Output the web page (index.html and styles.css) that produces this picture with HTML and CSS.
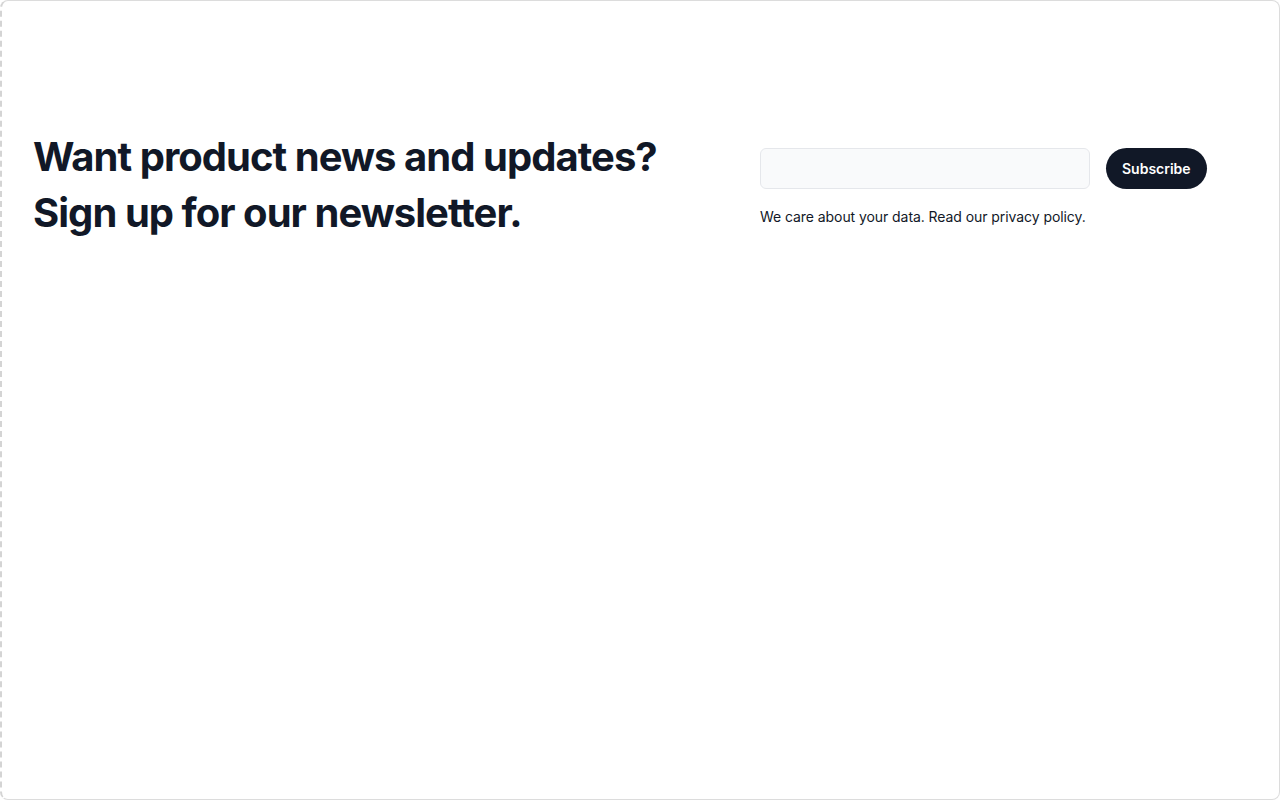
FILE: index.html
```html
<!DOCTYPE html>
<html lang="en">
<head>
<meta charset="utf-8">
<title>Newsletter</title>
<link rel="stylesheet" href="styles.css">
</head>
<body>
<div class="frame">
  <section class="newsletter">
    <h2 class="headline">Want product news and updates?<br>Sign up for our newsletter.</h2>
    <div class="signup">
      <form class="form">
        <input class="email" type="email" aria-label="Email address">
        <button class="btn" type="button">Subscribe</button>
      </form>
      <p class="note">We care about your data. Read our <a href="#">privacy policy</a>.</p>
    </div>
  </section>
</div>
</body>
</html>
```

FILE: styles.css
```css
* { box-sizing: border-box; }
html, body { margin: 0; padding: 0; background: #fff; }
body { font-family: Inter, "Noto Sans", sans-serif; color: #111827; }
.frame {
  width: 1280px;
  height: 800px;
  border: 1px solid #dcdcdc;
  border-left: 2px dashed #d4d4d4;
  border-radius: 8px;
  background: #fff;
  overflow: hidden;
}
.newsletter {
  display: grid;
  grid-template-columns: 727px 1fr;
  align-items: center;
  padding: 128px 32px 0 31px;
}
.headline {
  margin: 0;
  font-size: 40px;
  line-height: 56px;
  font-weight: 700;
  letter-spacing: -0.024em;
  color: #111827;
}
.signup { padding-top: 4px; }
.form {
  display: flex;
  gap: 16px;
  margin: 0;
}
.email {
  width: 330px;
  height: 41px;
  background: #f9fafb;
  border: 1px solid #e5e7eb;
  border-radius: 6px;
  outline: none;
  font: inherit;
}
.btn {
  height: 41px;
  padding: 0 16px;
  border: none;
  border-radius: 999px;
  background: #111827;
  color: #fff;
  font-family: Inter, sans-serif;
  font-size: 14px;
  font-weight: 600;
}
.note {
  margin: 18px 0 0;
  font-size: 14px;
  line-height: 20px;
  letter-spacing: -0.005em;
  color: #111827;
}
.note a { color: inherit; text-decoration: none; }
```
